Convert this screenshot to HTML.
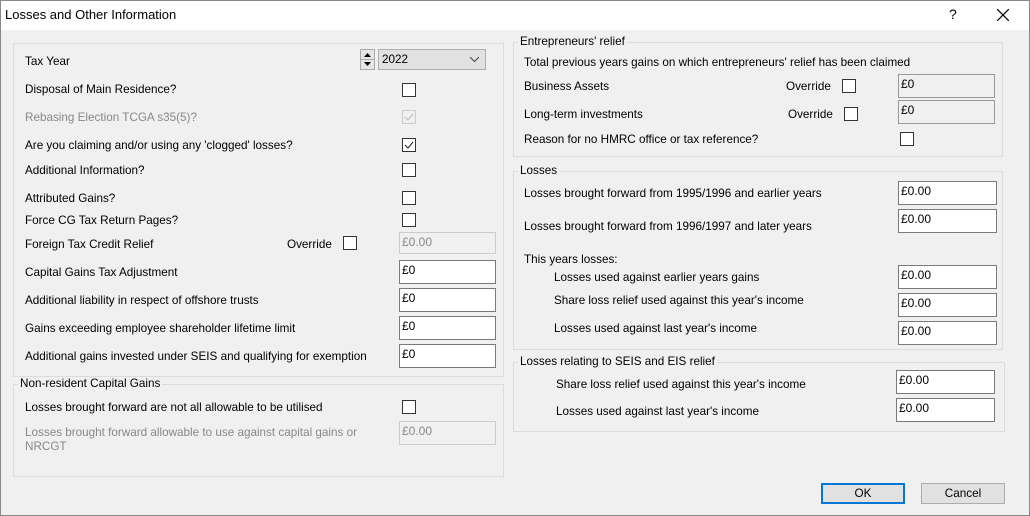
<html><head><style>
body{margin:0;width:1030px;height:516px;background:#f0f0f0;font-family:"Liberation Sans",sans-serif;font-size:11.7px;color:#000;position:relative;overflow:hidden}
.a{position:absolute;white-space:nowrap}
.t{position:absolute;left:0;top:0;width:1030px;height:30px;background:#fff}
.win{position:absolute;left:0;top:0;width:1028px;height:514px;border:1px solid #888}
.g{position:absolute;border:1px solid #dcdcdc}
.gl{position:absolute;background:#f0f0f0;padding:0 2px;white-space:nowrap}
.cb{position:absolute;width:12px;height:12px;border:1px solid #333;background:#fff}
.in{position:absolute;width:94px;height:22px;border:1px solid #7a7a7a;background:#fff;box-sizing:border-box;padding:2px 2px;font-size:12px}
.ro{background:#f0f0f0;border-color:#ccc;color:#888}
.ro2{background:#f0f0f0;border-color:#999;color:#000}
.gr{color:#888}
.btn{position:absolute;width:84px;height:21px;border:1px solid #adadad;background:#e1e1e1;box-sizing:border-box;text-align:center;line-height:19px}
</style></head><body>
<div class="t"></div><div class="win"></div>
<div class="a" style="left:5px;top:7px;font-size:13px">Losses and Other Information</div>
<div class="a" style="left:949px;top:6px;font-size:14px">?</div>
<svg class="a" style="left:997px;top:9px" width="12" height="12"><path d="M0 0L12 12M12 0L0 12" stroke="#000" stroke-width="1.2"/></svg>

<div class="g" style="left:13px;top:43px;width:489px;height:332px"></div>
<div class="a" style="left:25px;top:55px">Tax Year</div>
<div class="a" style="left:360px;top:49px;width:15px;height:21px;border:1px solid #aaa;background:#e6e6e6;box-sizing:border-box"><svg width="13" height="19"><path d="M3 7L6.5 3L10 7Z M3 12L6.5 16L10 12Z" fill="#000"/><line x1="0" y1="9.5" x2="13" y2="9.5" stroke="#aaa"/></svg></div>
<div class="a" style="left:378px;top:49px;width:108px;height:21px;border:1px solid #adadad;background:#e1e1e1;box-sizing:border-box;padding:3px 3px">2022<svg style="position:absolute;right:6px;top:7px" width="9" height="6"><path d="M0 0L4.5 4.5L9 0" stroke="#444" fill="none"/></svg></div>
<div class="a" style="left:25px;top:83px">Disposal of Main Residence?</div><div class="cb" style="left:402px;top:83px"></div>
<div class="a gr" style="left:25px;top:111px">Rebasing Election TCGA s35(5)?</div><div class="cb" style="left:402px;top:110px;border-color:#ccc;background:#f0f0f0"><svg width="12" height="12"><path d="M2 6L5 9L10 3" stroke="#bbb" fill="none"/></svg></div>
<div class="a" style="left:25px;top:139px">Are you claiming and/or using any 'clogged' losses?</div><div class="cb" style="left:402px;top:138px"><svg width="12" height="12"><path d="M2 6L5 9L10 3" stroke="#222" fill="none"/></svg></div>
<div class="a" style="left:25px;top:164px">Additional Information?</div><div class="cb" style="left:402px;top:163px"></div>
<div class="a" style="left:25px;top:192px">Attributed Gains?</div><div class="cb" style="left:402px;top:191px"></div>
<div class="a" style="left:25px;top:214px">Force CG Tax Return Pages?</div><div class="cb" style="left:402px;top:213px"></div>
<div class="a" style="left:25px;top:238px">Foreign Tax Credit Relief</div>
<div class="a" style="left:287px;top:238px">Override</div><div class="cb" style="left:343px;top:236px"></div>
<div class="in ro" style="left:399px;top:232px;width:97px">£0.00</div>
<div class="a" style="left:25px;top:266px">Capital Gains Tax Adjustment</div><div class="in" style="left:399px;top:260px;width:97px;height:24px">£0</div>
<div class="a" style="left:25px;top:294px">Additional liability in respect of offshore trusts</div><div class="in" style="left:399px;top:288px;width:97px;height:24px">£0</div>
<div class="a" style="left:25px;top:322px">Gains exceeding employee shareholder lifetime limit</div><div class="in" style="left:399px;top:316px;width:97px;height:24px">£0</div>
<div class="a" style="left:25px;top:350px">Additional gains invested under SEIS and qualifying for exemption</div><div class="in" style="left:399px;top:344px;width:97px;height:24px">£0</div>

<div class="g" style="left:13px;top:384px;width:489px;height:91px"></div>
<div class="gl" style="left:18px;top:377px">Non-resident Capital Gains</div>
<div class="a" style="left:25px;top:401px">Losses brought forward are not all allowable to be utilised</div><div class="cb" style="left:402px;top:400px"></div>
<div class="a gr" style="left:25px;top:426px;line-height:14px">Losses brought forward allowable to use against capital gains or<br>NRCGT</div>
<div class="in ro" style="left:399px;top:421px;width:97px;height:24px">£0.00</div>

<div class="g" style="left:513px;top:42px;width:488px;height:113px"></div>
<div class="gl" style="left:518px;top:35px">Entrepreneurs' relief</div>
<div class="a" style="left:524px;top:56px">Total previous years gains on which entrepreneurs' relief has been claimed</div>
<div class="a" style="left:524px;top:80px">Business Assets</div><div class="a" style="left:786px;top:80px">Override</div><div class="cb" style="left:842px;top:79px"></div>
<div class="in ro2" style="left:898px;top:74px;width:97px;height:24px">£0</div>
<div class="a" style="left:524px;top:108px">Long-term investments</div><div class="a" style="left:788px;top:108px">Override</div><div class="cb" style="left:844px;top:107px"></div>
<div class="in ro2" style="left:898px;top:100px;width:97px;height:24px">£0</div>
<div class="a" style="left:524px;top:133px">Reason for no HMRC office or tax reference?</div><div class="cb" style="left:900px;top:132px"></div>

<div class="g" style="left:513px;top:171px;width:488px;height:177px"></div>
<div class="gl" style="left:518px;top:164px">Losses</div>
<div class="a" style="left:524px;top:187px">Losses brought forward from 1995/1996 and earlier years</div><div class="in" style="left:898px;top:181px;width:99px;height:24px">£0.00</div>
<div class="a" style="left:524px;top:220px">Losses brought forward from 1996/1997 and later years</div><div class="in" style="left:898px;top:209px;width:99px;height:24px">£0.00</div>
<div class="a" style="left:524px;top:253px">This years losses:</div>
<div class="a" style="left:554px;top:271px">Losses used against earlier years gains</div><div class="in" style="left:898px;top:265px;width:99px;height:24px">£0.00</div>
<div class="a" style="left:554px;top:294px">Share loss relief used against this year's income</div><div class="in" style="left:898px;top:293px;width:99px;height:24px">£0.00</div>
<div class="a" style="left:554px;top:322px">Losses used against last year's income</div><div class="in" style="left:898px;top:321px;width:99px;height:24px">£0.00</div>

<div class="g" style="left:513px;top:362px;width:490px;height:68px"></div>
<div class="gl" style="left:518px;top:355px">Losses relating to SEIS and EIS relief</div>
<div class="a" style="left:556px;top:378px">Share loss relief used against this year's income</div><div class="in" style="left:896px;top:370px;width:99px;height:24px">£0.00</div>
<div class="a" style="left:556px;top:405px">Losses used against last year's income</div><div class="in" style="left:896px;top:398px;width:99px;height:24px">£0.00</div>

<div class="btn" style="left:821px;top:483px;border:1px solid #0078d7;box-shadow:inset 0 0 0 1px #0078d7">OK</div>
<div class="btn" style="left:921px;top:483px">Cancel</div>
</body></html>
